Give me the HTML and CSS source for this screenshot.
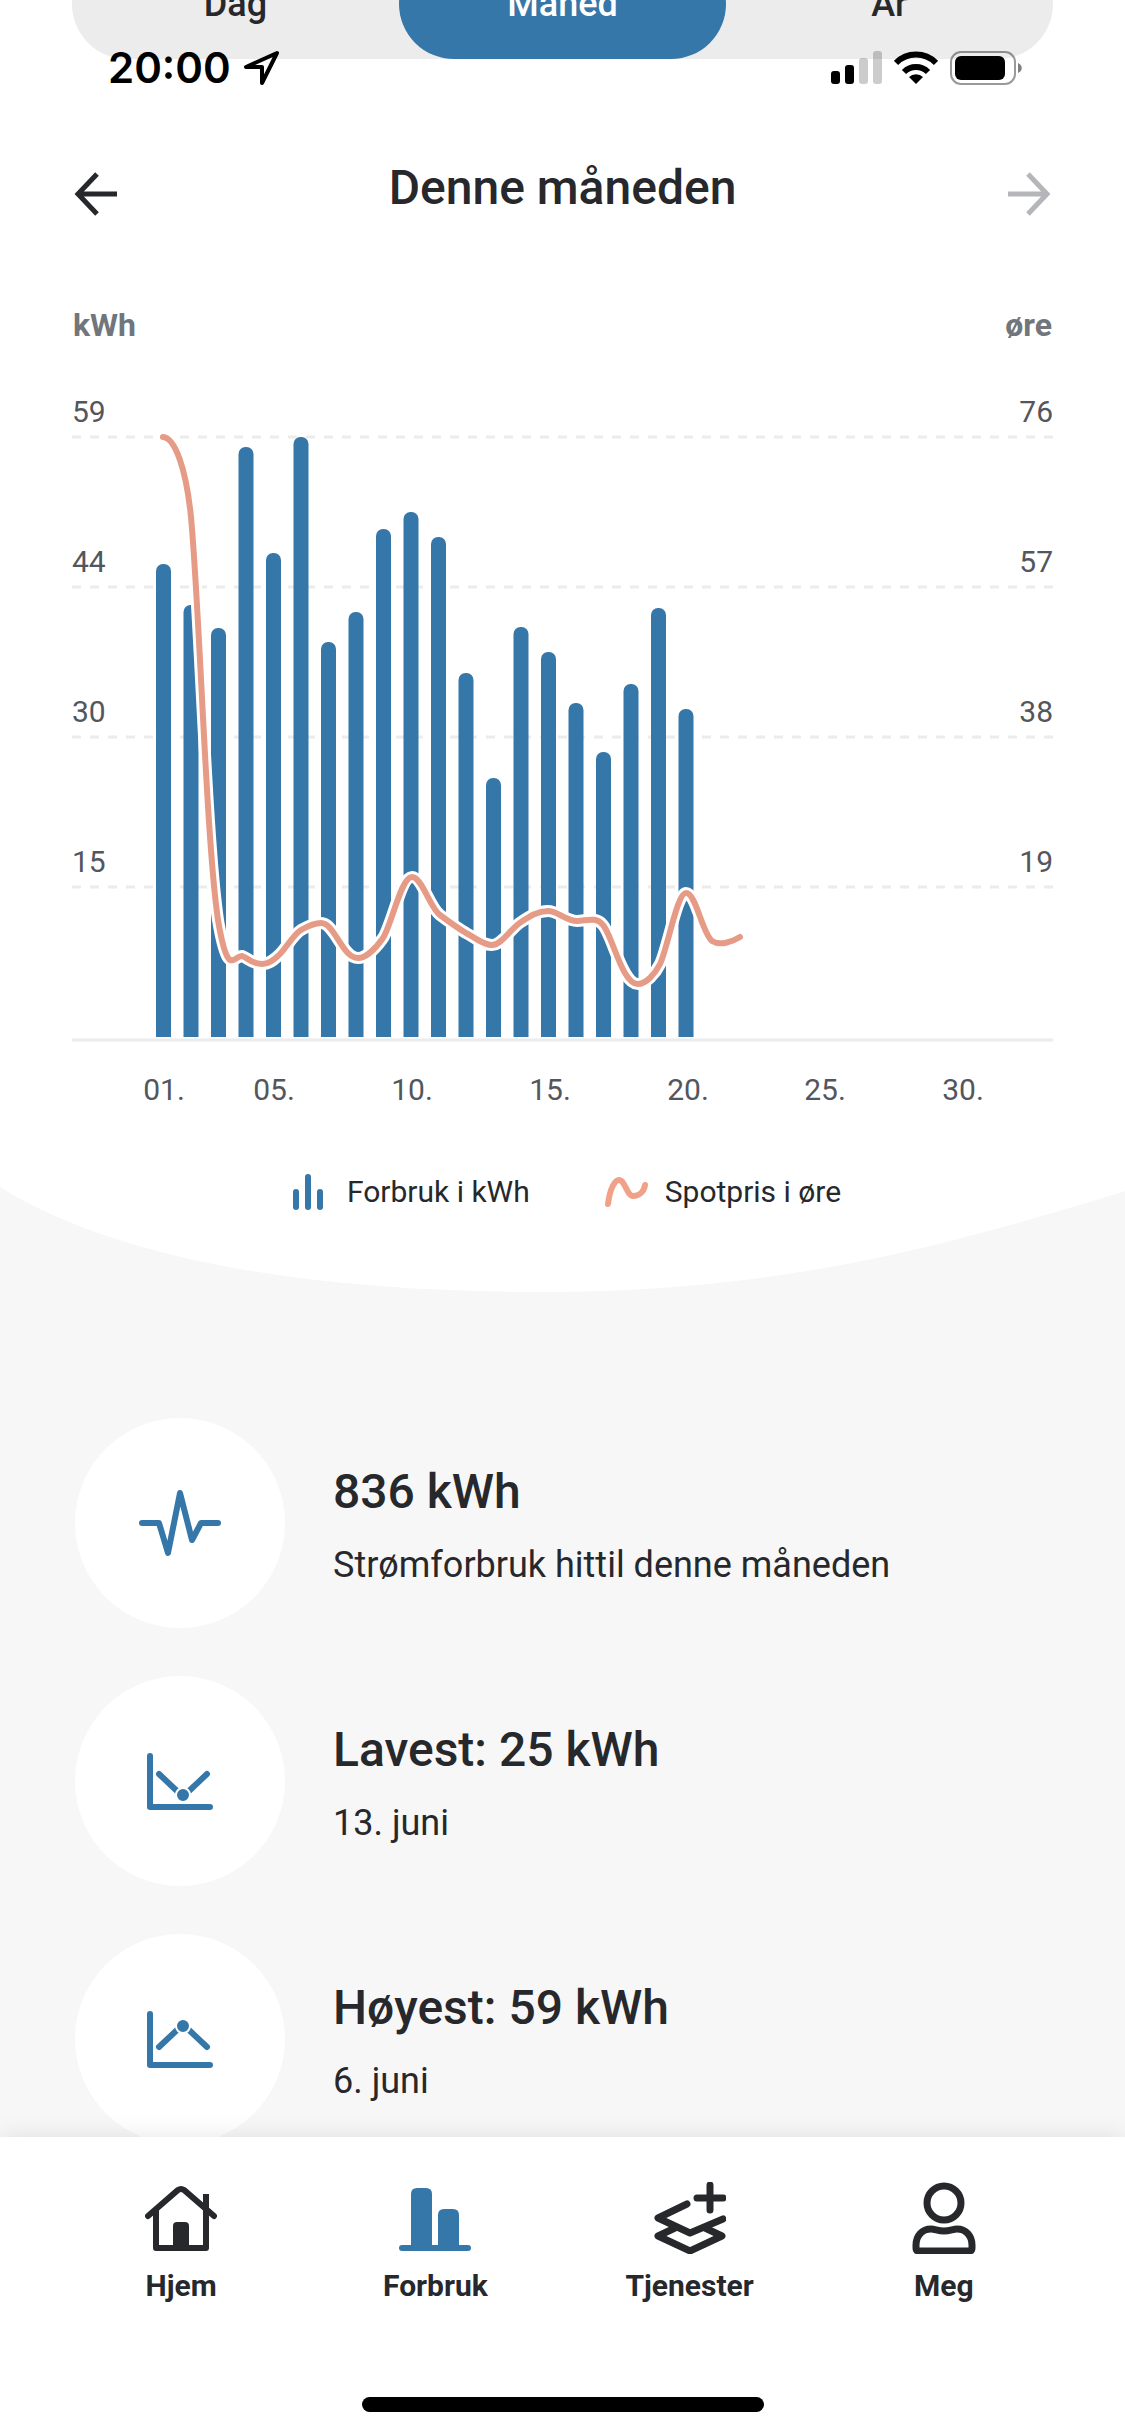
FILE: index.html
```html
<!DOCTYPE html>
<html lang="nb">
<head>
<meta charset="utf-8">
<meta name="viewport" content="width=device-width, initial-scale=1">
<title>Forbruk</title>
<link rel="stylesheet" href="styles.css">
</head>
<body>
<div class="app">
  <div class="status">
    <span class="status-time">20:00</span>
    <svg class="status-location" width="36" height="36" viewBox="0 0 36 36" aria-hidden="true"><path d="M34 3 3 17H19V33Z" fill="none" stroke="#000" stroke-width="4" stroke-linejoin="round"/></svg>
    <svg class="status-signal" width="52" height="36" viewBox="0 0 52 36" aria-hidden="true">
      <rect x="0" y="21" width="9" height="13" rx="3"/><rect x="14" y="15" width="9" height="19" rx="3"/>
      <rect x="28" y="8" width="9" height="26" rx="3" opacity=".2"/><rect x="42" y="1" width="9" height="33" rx="3" opacity=".2"/>
    </svg>
    <svg class="status-wifi" width="44" height="36" viewBox="0 0 44 36" aria-hidden="true">
      <path d="M22 34 15 27A10 10 0 0 1 29 27Z"/>
      <path d="M10 22A17 17 0 0 1 34 22" fill="none" stroke="#000" stroke-width="6"/>
      <path d="M2 13A28 28 0 0 1 42 13" fill="none" stroke="#000" stroke-width="6"/>
    </svg>
    <svg class="status-battery" width="74" height="36" viewBox="0 0 74 36" aria-hidden="true">
      <rect x="1" y="2" width="64" height="32" rx="10" fill="none" stroke="#000" stroke-opacity=".4" stroke-width="2"/>
      <rect x="5" y="6" width="50" height="24" rx="6"/><path d="M68 13C73 15 73 21 68 23Z" opacity=".5"/>
    </svg>
  </div>

  <main class="content">
    <section class="hero">
      <svg class="hero-curve" viewBox="0 0 1125 110" preserveAspectRatio="none" aria-hidden="true"><path d="M0 5C120 80 320 110 540 110 760 110 920 73 1125 9V111H0Z"/></svg>
      <div class="segments" role="tablist">
        <button type="button" role="tab">Dag</button>
        <button type="button" role="tab" class="selected" aria-selected="true">Måned</button>
        <button type="button" role="tab">År</button>
      </div>
      <header class="period">
        <button type="button" class="period-step" aria-label="Forrige måned"><svg width="48" height="48" viewBox="0 0 48 48"><path d="M45 24H6M25 4 6 24 25 44"/></svg></button>
        <h1>Denne måneden</h1>
        <button type="button" class="period-step" aria-label="Neste måned" disabled><svg width="48" height="48" viewBox="0 0 48 48"><path d="M3 24H42M23 4 42 24 23 44"/></svg></button>
      </header>
      <div class="units"><span>kWh</span><span>øre</span></div>
      <svg class="chart" viewBox="0 0 981 720" role="img" aria-label="Forbruk og spotpris per dag">
        <defs><clipPath id="plot"><rect width="981" height="647"/></clipPath></defs>
        <path class="grid" d="M0 47H981M0 197H981M0 347H981M0 497H981"/>
        <path class="base" d="M0 650H981"/>
        <g class="bars" clip-path="url(#plot)">
          <rect x="84" y="174" width="15" height="500" rx="7"/>
          <rect x="111.5" y="215" width="15" height="500" rx="7"/>
          <rect x="139" y="238" width="15" height="500" rx="7"/>
          <rect x="166.5" y="57" width="15" height="620" rx="7"/>
          <rect x="194" y="163" width="15" height="500" rx="7"/>
          <rect x="221.5" y="47" width="15" height="620" rx="7"/>
          <rect x="249" y="252" width="15" height="500" rx="7"/>
          <rect x="276.5" y="222" width="15" height="500" rx="7"/>
          <rect x="304" y="139" width="15" height="530" rx="7"/>
          <rect x="331.5" y="122" width="15" height="550" rx="7"/>
          <rect x="359" y="147" width="15" height="520" rx="7"/>
          <rect x="386.5" y="283" width="15" height="500" rx="7"/>
          <rect x="414" y="388" width="15" height="500" rx="7"/>
          <rect x="441.5" y="237" width="15" height="500" rx="7"/>
          <rect x="469" y="262" width="15" height="500" rx="7"/>
          <rect x="496.5" y="313" width="15" height="500" rx="7"/>
          <rect x="524" y="362" width="15" height="500" rx="7"/>
          <rect x="551.5" y="294" width="15" height="500" rx="7"/>
          <rect x="579" y="218" width="15" height="500" rx="7"/>
          <rect x="606.5" y="319" width="15" height="500" rx="7"/>
        </g>
        <defs><path id="price" d="M91 47C103 48 114 78 119 127C128 225 134 448 146 530C156 590 162 565 170 566C176 568 180 574 190 574C197 574 202 570 208 564C215 557 221 545 229 540C236 536 243 533 249 533C263 533 270 568 286 568C294 568 304 558 311 548C320 534 329 487 340 487C350 487 358 518 368 525C376 531 384 537 394 543C404 548 411 555 420 555C430 555 438 539 449 532C458 526 466 521 476 521C486 521 494 531 505 531C514 531 524 526 531 535C541 547 550 594 566 594C574 594 583 584 588 574C596 557 605 503 614 503C624 503 630 543 640 551C648 556 660 552 668 547"/></defs>
        <use href="#price" class="line-halo"/>
        <use href="#price" class="line"/>
        <g class="axis">
          <text x="0" y="32">59</text><text x="0" y="182">44</text><text x="0" y="332">30</text><text x="0" y="482">15</text>
        </g>
        <g class="axis axis-right">
          <text x="981" y="32">76</text><text x="981" y="182">57</text><text x="981" y="332">38</text><text x="981" y="482">19</text>
        </g>
        <g class="axis axis-days">
          <text x="92" y="710">01.</text><text x="202" y="710">05.</text><text x="340" y="710">10.</text><text x="478" y="710">15.</text><text x="616" y="710">20.</text><text x="753" y="710">25.</text><text x="891" y="710">30.</text>
        </g>
      </svg>
      <ul class="legend">
        <li><svg width="48" height="48" viewBox="0 0 48 48" aria-hidden="true"><path d="M12 24V39M24 9V39M36 24V39" fill="none" stroke="#3577a9" stroke-width="6" stroke-linecap="round"/></svg>Forbruk i kWh</li>
        <li><svg width="48" height="48" viewBox="0 0 48 48" aria-hidden="true"><path d="M6 36C8 20 13 12 17 12 23 12 25 28 31 28 37 28 42 24 43 17" fill="none" stroke="#f2a189" stroke-width="6" stroke-linecap="round"/></svg>Spotpris i øre</li>
      </ul>
    </section>

    <ul class="stats">
      <li>
        <span class="stat-icon"><svg width="84" height="84" viewBox="0 0 84 84" aria-hidden="true"><path d="M4 42H21L30 72 42 12 54 59 63 42H80"/></svg></span>
        <div class="stat-text"><h2>836 kWh</h2><p>Strømforbruk hittil denne måneden</p></div>
      </li>
      <li>
        <span class="stat-icon"><svg width="84" height="84" viewBox="0 0 84 84" aria-hidden="true"><path d="M12 17V68H72"/><path d="M21 35 39 52M69 35 51 52"/><circle cx="45" cy="56" r="7"/></svg></span>
        <div class="stat-text"><h2>Lavest: 25 kWh</h2><p>13. juni</p></div>
      </li>
      <li>
        <span class="stat-icon"><svg width="84" height="84" viewBox="0 0 84 84" aria-hidden="true"><path d="M12 17V68H72"/><path d="M21 50 39 33M69 50 51 33"/><circle cx="45" cy="29" r="7"/></svg></span>
        <div class="stat-text"><h2>Høyest: 59 kWh</h2><p>6. juni</p></div>
      </li>
    </ul>
  </main>

  <nav class="tabs">
    <div class="tab-row">
      <a href="#hjem"><svg width="72" height="72" viewBox="0 0 72 72" aria-hidden="true"><path d="M11 28V66H61V12" fill="none" stroke="#27282c" stroke-width="6" stroke-linejoin="round"/><path d="M3 34 33 8Q36 6 39 8L69 34" fill="none" stroke="#27282c" stroke-width="6" stroke-linecap="round"/><path d="M28 66V44Q28 40 32 40H40Q44 40 44 44V66Z" fill="#27282c"/></svg>Hjem</a>
      <a href="#forbruk" aria-current="page"><svg width="72" height="72" viewBox="0 0 72 72" aria-hidden="true" fill="#3577a9"><path d="M12 66V12Q12 6 18 6H27Q33 6 33 12V66ZM39 66V33Q39 27 45 27H54Q60 27 60 33V66Z"/><rect y="63" width="72" height="6" rx="3"/></svg>Forbruk</a>
      <a href="#tjenester"><svg width="72" height="72" viewBox="0 0 72 72" aria-hidden="true" fill="none" stroke="#27282c" stroke-width="7" stroke-linecap="round" stroke-linejoin="round"><path d="M33 22 4 36 36 51 69 37"/><path d="M21 46 4 54 36 69 68 54 51 46"/><path d="M56 3V28M43 16H69"/></svg>Tjenester</a>
      <a href="#meg"><svg width="72" height="72" viewBox="0 0 72 72" aria-hidden="true" fill="none" stroke="#27282c" stroke-width="7" stroke-linejoin="round"><circle cx="36" cy="21" r="17"/><path d="M11 69H61Q64 69 64 66V63C64 54 58 47 49 47 45 47 42 49 36 49 30 49 27 47 23 47 14 47 8 54 8 63V66Q8 69 11 69Z"/></svg>Meg</a>
    </div>
    <div class="home-bar"></div>
  </nav>
</div>
</body>
</html>
```
FILE: styles.css
```css
* { box-sizing: border-box; }
body { margin: 0; background: #f7f7f7; color: #27282c; font-family: Roboto, "Liberation Sans", sans-serif; }
h1, h2, p, ul { margin: 0; padding: 0; }
ul { list-style: none; }
svg { display: block; flex: none; }
button { border: 0; padding: 0; background: none; color: inherit; font: inherit; }

.app { position: relative; height: 100vh; display: flex; flex-direction: column; }

/* System status bar, floats over the scrolled content */
.status { position: absolute; z-index: 2; top: 0; left: 0; right: 0; display: flex; align-items: center; padding: 42px 101px 0 108px; color: #000; }
.status-time { font: 600 42px/52px Inter, "Liberation Sans", sans-serif; }
.status-location { margin-left: 12px; }
.status-signal { margin-left: auto; }
.status-wifi { margin-left: 11px; }
.status-battery { margin-left: 12px; }

.content { flex: 1 1 0; min-height: 0; overflow-y: auto; scrollbar-width: none; }

.hero { position: relative; isolation: isolate; display: flex; flex-direction: column; padding: 0 72px 76px; background: #fff; }
.hero-curve { position: absolute; z-index: -1; left: 0; bottom: 0; width: 100%; height: 110px; fill: #f7f7f7; }

.segments { display: grid; grid-template-columns: repeat(3, 1fr); height: 110px; margin-top: -51px; border-radius: 55px; background: #ececec; }
.segments button { border-radius: 55px; font-size: 36px; font-weight: 500; }
.segments .selected { background: #3577a9; color: #fff; }

.period { display: flex; justify-content: space-between; align-items: flex-end; margin-top: 101px; height: 58px; }
.period h1 { align-self: flex-start; font-size: 48px; line-height: 56px; font-weight: 500; }
.period-step path { fill: none; stroke: #27282c; stroke-width: 5; }
.period-step:disabled path { stroke: #b5b6ba; }

.units { display: flex; justify-content: space-between; margin-top: 89px; padding: 0 1px; font-size: 32px; line-height: 36px; font-weight: 700; color: #71767c; }

.chart { width: 100%; margin-top: 47px; }
.grid { stroke: #ececec; stroke-width: 3; stroke-dasharray: 9 9; }
.base { stroke: #ececec; stroke-width: 3; }
.bars { fill: #3577a9; }
.line, .line-halo { fill: none; stroke: #e69b86; stroke-width: 6; stroke-linecap: round; }
.line-halo { stroke: #fff; stroke-width: 12; stroke-linecap: butt; }
.axis { fill: #53565c; font-size: 30px; }
.axis-right { text-anchor: end; }
.axis-days { text-anchor: middle; }

.legend { display: flex; justify-content: center; gap: 72px; margin-top: 58px; }
.legend li { display: flex; align-items: center; gap: 15px; font-size: 30px; line-height: 36px; }

.stats { display: grid; gap: 48px; padding: 126px 75px 48px; }
.stats li { display: flex; align-items: center; gap: 48px; }
.stat-icon { display: grid; place-items: center; flex: none; width: 210px; height: 210px; border-radius: 50%; background: #fff; }
.stat-icon path { fill: none; stroke: #3577a9; stroke-width: 6; stroke-linecap: round; stroke-linejoin: round; }
.stat-icon circle { fill: #3577a9; stroke: #fff; stroke-width: 2; }
.stat-text { display: grid; gap: 24px; padding-top: 4px; }
.stat-text h2 { font-size: 48px; line-height: 56px; font-weight: 500; }
.stat-text p { font-size: 36px; line-height: 42px; }

.tabs { position: relative; z-index: 1; background: #fff; box-shadow: 0 0 24px rgba(0, 0, 0, .1); padding: 45px 54px 24px; }
.tab-row { display: grid; grid-template-columns: repeat(4, 1fr); }
.tab-row a { display: flex; flex-direction: column; align-items: center; gap: 14px; color: inherit; text-decoration: none; font-size: 30px; line-height: 36px; font-weight: 700; }
.home-bar { width: 402px; height: 15px; margin: 93px auto 0; border-radius: 8px; background: #000; }
```
